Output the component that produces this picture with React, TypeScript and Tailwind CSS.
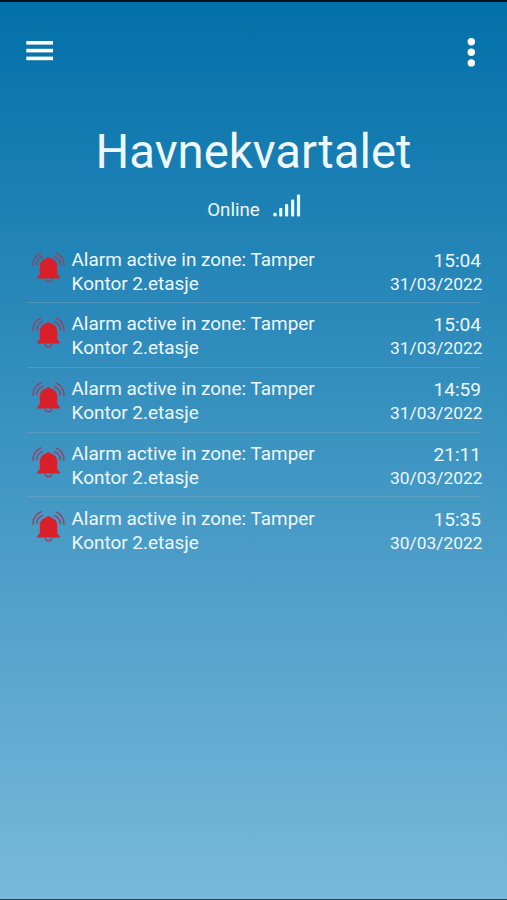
type AlarmEvent = {
  message: string;
  location: string;
  time: string;
  date: string;
};

const events: AlarmEvent[] = [
  { message: 'Alarm active in zone: Tamper', location: 'Kontor 2.etasje', time: '15:04', date: '31/03/2022' },
  { message: 'Alarm active in zone: Tamper', location: 'Kontor 2.etasje', time: '15:04', date: '31/03/2022' },
  { message: 'Alarm active in zone: Tamper', location: 'Kontor 2.etasje', time: '14:59', date: '31/03/2022' },
  { message: 'Alarm active in zone: Tamper', location: 'Kontor 2.etasje', time: '21:11', date: '30/03/2022' },
  { message: 'Alarm active in zone: Tamper', location: 'Kontor 2.etasje', time: '15:35', date: '30/03/2022' },
];

function MenuIcon() {
  return (
    <svg width="28" height="20" viewBox="0 0 28 20" fill="currentColor">
      <rect x="0.3" y="0" width="26.7" height="3.6" />
      <rect x="0.3" y="7.8" width="26.7" height="3.6" />
      <rect x="0.3" y="15.6" width="26.7" height="3.6" />
    </svg>
  );
}

function MoreIcon() {
  return (
    <svg width="8" height="30" viewBox="0 0 8 30" fill="currentColor">
      <circle cx="4.3" cy="3.8" r="3.7" />
      <circle cx="4.3" cy="14.3" r="3.7" />
      <circle cx="4.3" cy="24.9" r="3.7" />
    </svg>
  );
}

function SignalIcon() {
  return (
    <svg width="28" height="24" viewBox="0 0 28 24" fill="currentColor">
      <rect x="0.2" y="18.8" width="3.6" height="3.6" rx="1.4" />
      <rect x="6.2" y="14" width="3.1" height="8.4" rx="1" />
      <rect x="12" y="10" width="3.2" height="12.4" rx="1" />
      <rect x="18" y="5.5" width="3.2" height="16.9" rx="1" />
      <rect x="23.9" y="0.5" width="3.2" height="21.9" rx="1" />
    </svg>
  );
}

function BellIcon() {
  return (
    <svg width="34" height="32" viewBox="0 0 34 32" fill="none">
      {/* Ringing arcs */}
      <g stroke="#95415f" strokeWidth="1.4" strokeLinecap="round">
        <path d="M9 0.9C4 3.2 0.9 7.6 1 13.4" />
        <path d="M10.4 4.6C6.6 6.2 4.8 9 4.7 12.6" />
        <path d="M24 0.9c5 2.3 8.1 6.7 8 12.5" />
        <path d="M22.6 4.6c3.8 1.6 5.6 4.4 5.7 8" />
        <path d="M13.2 27.4c0.5 1.7 1.7 2.4 3.3 2.4s2.8-0.7 3.3-2.4" />
      </g>
      {/* Body */}
      <path
        fill="#d91f29"
        d="M16.5 5.2c1.2 0 2 0.6 2.3 1.4 4 1 6.4 3.9 6.4 8v6.4c0 1.2 0.4 2 1.3 2.8l1 0.9c0.7 0.8 0.4 1.8-0.6 1.8H6.1c-1 0-1.3-1-0.6-1.8l1-0.9c0.9-0.8 1.3-1.6 1.3-2.8v-6.4c0-4.1 2.4-7 6.4-8 0.3-0.8 1.1-1.4 2.3-1.4z"
      />
    </svg>
  );
}

function EventRow({ event }: { event: AlarmEvent }) {
  return (
    <li className="flex h-[64.75px] border-b border-[#94adbd]/35 pt-[9px] pl-[5px] last:border-b-0">
      <div className="mt-[5px] w-[39.5px] shrink-0">
        <BellIcon />
      </div>
      <div className="grow pt-[0.2px] text-[18.95px] leading-6 whitespace-nowrap">
        <p>{event.message}</p>
        <p>{event.location}</p>
      </div>
      <div className="-mr-[1.5px] shrink-0 pt-[0.2px] text-right">
        <p className="pr-[1.5px] text-[19.1px] leading-[25px]">{event.time}</p>
        <p className="text-[17.4px] leading-[22px]">{event.date}</p>
      </div>
    </li>
  );
}

export default function App() {
  return (
    <div className="h-[900px] w-full overflow-hidden border-t-2 border-b border-t-[#02131d] border-b-[#26465a] bg-linear-to-b/srgb from-[#0270a9] to-[#78b9da] font-[Roboto,sans-serif] text-[#eef8ff]">
      <header className="flex h-[68px] items-start justify-between pt-[36px] pr-8 pl-[26px] text-white">
        <button type="button" aria-label="Menu" className="pt-[3px]">
          <MenuIcon />
        </button>
        <button type="button" aria-label="More options">
          <MoreIcon />
        </button>
      </header>

      <h1 className="mt-[54px] text-center text-[47.3px] leading-[56px] whitespace-nowrap">
        Havnekvartalet
      </h1>

      <div className="mt-[14px] flex h-7 justify-center gap-[13px] pl-[1px]">
        <span className="pt-1 text-[18.7px] leading-6">Online</span>
        <SignalIcon />
      </div>

      <ul className="mt-[16.45px] mr-[26px] ml-[27px]">
        {events.map((event, i) => (
          <EventRow key={i} event={event} />
        ))}
      </ul>
    </div>
  );
}
